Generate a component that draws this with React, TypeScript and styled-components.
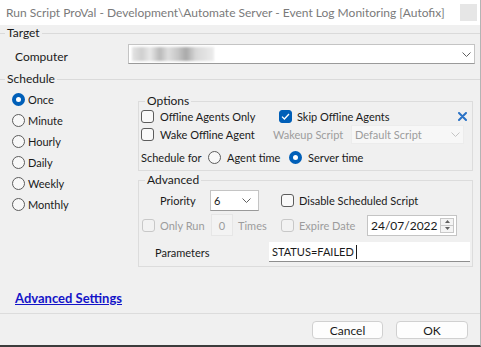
import React from 'react'
import styled, { createGlobalStyle, css } from 'styled-components'

const GlobalStyle = createGlobalStyle`
  html, body {
    margin: 0;
    padding: 0;
    background: #f0f0f0;
  }
  body {
    font-family: Lato, "Noto Sans", sans-serif;
    font-size: 11px;
    color: #1a1a1a;
  }
`

const Window = styled.div`
  width: 481px;
  height: 347px;
  box-sizing: border-box;
  display: flex;
  flex-direction: column;
  background: #f0f0f0;
  border-right: 1px solid #b4b4b4;
  border-bottom: 2px solid #3c3c3c;
  overflow: hidden;
`

const TitleBar = styled.div`
  flex: none;
  height: 25px;
  display: flex;
  align-items: center;
  padding: 0 3px 0 6px;
  background: #fff;
`

const Title = styled.div`
  flex: 1;
  font-size: 12px;
  color: #7a7a7a;
  white-space: nowrap;
  overflow: hidden;
`

const CloseBox = styled.div`
  width: 17px;
  height: 17px;
  background: #e6e6e6;
`

const Group = styled.fieldset<{ $boxed?: boolean; $width?: number }>`
  margin: 0;
  padding: 0;
  min-width: 0;
  box-sizing: border-box;
  border: 0;
  border-top: 1px solid #dadada;
  ${p =>
    p.$boxed &&
    css`
      border: 1px solid #dcdcdc;
    `}
  ${p =>
    p.$width &&
    css`
      width: ${p.$width}px;
    `}
`

const Legend = styled.legend<{ $offset: number }>`
  margin-left: ${p => p.$offset}px;
  padding: 0 2px;
  line-height: 16px;
  font-size: 12px;
`

const TargetRow = styled.div`
  display: flex;
  height: 20px;
  margin-top: 3px;
  padding: 0 0 7px 15px;
`

const FieldLabel = styled.span<{ $w: number }>`
  width: ${p => p.$w}px;
  padding-top: 5px;
  font-size: 12px;
`

const Combo = styled.div<{ $w: number; $h?: number; $disabled?: boolean; $pr?: number }>`
  flex: none;
  width: ${p => p.$w}px;
  height: ${p => p.$h || 20}px;
  box-sizing: border-box;
  display: flex;
  align-items: center;
  justify-content: space-between;
  padding: 0 ${p => p.$pr ?? 3}px 0 3px;
  background: ${p => (p.$disabled ? '#f7f7f7' : '#fff')};
  border: 1px solid ${p => (p.$disabled ? '#ececec' : '#c4c4c4')};
  border-bottom-color: ${p => (p.$disabled ? '#ececec' : '#9a9a9a')};
  color: ${p => (p.$disabled ? '#9c9c9c' : '#1a1a1a')};
`

const Blur = styled.div`
  width: 82px;
  height: 14px;
  background: linear-gradient(
    90deg,
    #e4e4e4 0%,
    #cfcfcf 12%,
    #e8e8e8 22%,
    #b9b9b9 34%,
    #dedede 44%,
    #c6c6c6 56%,
    #a9a9a9 66%,
    #d8d8d8 78%,
    #ececec 100%
  );
  filter: blur(1px);
`

const ScheduleBody = styled.div`
  display: flex;
`

const RadioList = styled.div`
  width: 138px;
  flex: none;
  box-sizing: border-box;
  padding: 2px 0 0 12px;
`

const RadioItem = styled.label`
  display: flex;
  align-items: center;
  gap: 3px;
  height: 21px;
`

const RightColumn = styled.div`
  margin-top: 6px;
  display: flex;
  flex-direction: column;
  gap: 1px;
`

const GroupBody = styled.div<{ $pb: number }>`
  padding: 0 0 ${p => p.$pb}px 2px;
`

const Row = styled.div<{ $h: number; $mt?: number }>`
  display: flex;
  align-items: center;
  height: ${p => p.$h}px;
  margin-top: ${p => p.$mt || 0}px;
`

const Cell = styled.div<{ $w?: number; $gap?: number; $pl?: number }>`
  display: flex;
  align-items: center;
  flex: none;
  gap: ${p => p.$gap ?? 6}px;
  padding-left: ${p => p.$pl || 0}px;
  box-sizing: border-box;
  ${p =>
    p.$w &&
    css`
      width: ${p.$w}px;
    `}
  white-space: nowrap;
`

const Text = styled.span<{ $disabled?: boolean }>`
  color: ${p => (p.$disabled ? '#9c9c9c' : '#1a1a1a')};
  white-space: nowrap;
`

const CheckBox = styled.span<{ $checked?: boolean; $disabled?: boolean }>`
  flex: none;
  width: 13px;
  height: 13px;
  box-sizing: border-box;
  border-radius: 3px;
  display: flex;
  align-items: center;
  justify-content: center;
  border: 1px solid ${p => (p.$disabled ? '#c8c8c8' : p.$checked ? '#005fb8' : '#5c5c5c')};
  background: ${p => (p.$checked ? '#005fb8' : p.$disabled ? '#f2f2f2' : '#f9f9f9')};
`

const RadioDot = styled.span<{ $checked?: boolean }>`
  flex: none;
  width: 13px;
  height: 13px;
  box-sizing: border-box;
  border-radius: 50%;
  ${p =>
    p.$checked
      ? css`
          border: 4px solid #005fb8;
          background: #fff;
        `
      : css`
          border: 1px solid #5c5c5c;
          background: #f8f8f8;
        `}
`

const CloseX = styled.svg`
  margin-left: auto;
  margin-right: 5px;
`

const SmallBox = styled.div`
  flex: none;
  width: 22px;
  height: 22px;
  box-sizing: border-box;
  display: flex;
  align-items: center;
  justify-content: center;
  background: #f3f3f3;
  border: 1px solid #e6e6e6;
  color: #9c9c9c;
`

const DateBox = styled.div`
  flex: none;
  width: 90px;
  height: 21px;
  box-sizing: border-box;
  display: flex;
  align-items: center;
  justify-content: space-between;
  padding: 0 2px 0 3px;
  background: #fff;
  border: 1px solid #c4c4c4;
  font-size: 12px;
`

const Spin = styled.div`
  width: 14px;
  height: 15px;
  box-sizing: border-box;
  display: flex;
  flex-direction: column;
  border: 1px solid #c8c8c8;
  background: #f4f4f4;
`

const SpinHalf = styled.div<{ $top?: boolean }>`
  flex: 1;
  display: flex;
  align-items: center;
  justify-content: center;
  ${p =>
    p.$top &&
    css`
      border-bottom: 1px solid #c8c8c8;
    `}
`

const ParamInput = styled.div`
  flex: none;
  width: 201px;
  height: 20px;
  box-sizing: border-box;
  display: flex;
  align-items: center;
  padding-left: 3px;
  background: #fff;
  border-bottom: 1px solid #8e8e8e;
`

const Caret = styled.span`
  width: 1px;
  height: 14px;
  margin-left: 2px;
  background: #1a1a1a;
`

const Footer = styled.div`
  margin-top: auto;
  flex: none;
`

const LinkRow = styled.div`
  height: 16px;
  padding-left: 15px;
  margin-bottom: 7px;
  line-height: 16px;
`

const Link = styled.a`
  color: #1414c8;
  font-size: 13px;
  font-weight: 700;
  text-decoration: underline;
  cursor: pointer;
`

const ButtonBar = styled.div`
  height: 32px;
  box-sizing: border-box;
  border-top: 1px solid #dcdcdc;
  display: flex;
  justify-content: flex-end;
  gap: 13px;
  padding: 7px 12px 0 0;
`

const Button = styled.button<{ $w: number }>`
  width: ${p => p.$w}px;
  height: 18px;
  padding: 0;
  font: inherit;
  font-size: 12px;
  color: #1a1a1a;
  background: #fdfdfd;
  border: 1px solid #d0d0d0;
  border-radius: 4px;
`

const Chevron = ({ color = '#606060' }: { color?: string }) => (
  <svg width="9" height="5" viewBox="0 0 9 5">
    <polyline points="0.5,0.5 4.5,4.5 8.5,0.5" fill="none" stroke={color} strokeWidth="1" />
  </svg>
)

const Tick = () => (
  <svg width="9" height="7" viewBox="0 0 9 7">
    <polyline points="1,3.6 3.4,6 8,1" fill="none" stroke="#fff" strokeWidth="1.3" />
  </svg>
)

const Check = ({ label, checked, disabled, gap = 6 }: { label: string; checked?: boolean; disabled?: boolean; gap?: number }) => (
  <Cell $gap={gap}>
    <CheckBox $checked={checked} $disabled={disabled}>{checked && <Tick />}</CheckBox>
    <Text $disabled={disabled}>{label}</Text>
  </Cell>
)

const frequencies = ['Once', 'Minute', 'Hourly', 'Daily', 'Weekly', 'Monthly']

export default function App() {
  return (
    <>
      <GlobalStyle />
      <Window>
        <TitleBar>
          <Title>Run Script ProVal - Development\Automate Server - Event Log Monitoring [Autofix]</Title>
          <CloseBox />
        </TitleBar>

        <Group>
          <Legend $offset={5}>Target</Legend>
          <TargetRow>
            <FieldLabel $w={113}>Computer</FieldLabel>
            <Combo $w={347}>
              <Blur />
              <Chevron />
            </Combo>
          </TargetRow>
        </Group>

        <Group>
          <Legend $offset={5}>Schedule</Legend>
          <ScheduleBody>
            <RadioList>
              {frequencies.map((f, i) => (
                <RadioItem key={f}>
                  <RadioDot $checked={i === 0} />
                  <Text>{f}</Text>
                </RadioItem>
              ))}
            </RadioList>

            <RightColumn>
              <Group $boxed $width={335}>
                <Legend $offset={6}>Options</Legend>
                <GroupBody $pb={1}>
                  <Row $h={15}>
                    <Cell $w={138}>
                      <Check label="Offline Agents Only" />
                    </Cell>
                    <Check label="Skip Offline Agents" checked gap={5} />
                    <CloseX width="9" height="9" viewBox="0 0 9 9">
                      <path d="M1 1 L8 8 M8 1 L1 8" stroke="#2a72c6" strokeWidth="2" strokeLinecap="round" />
                    </CloseX>
                  </Row>
                  <Row $h={21}>
                    <Cell $w={132}>
                      <Check label="Wake Offline Agent" />
                    </Cell>
                    <Cell $w={78}>
                      <Text $disabled>Wakeup Script</Text>
                    </Cell>
                    <Combo $w={113} $h={19} $disabled>
                      <span>Default Script</span>
                      <Chevron color="#c4c4c4" />
                    </Combo>
                  </Row>
                  <Row $h={24}>
                    <Cell $w={67}>
                      <Text>Schedule for</Text>
                    </Cell>
                    <Cell $w={81}>
                      <RadioDot />
                      <Text>Agent time</Text>
                    </Cell>
                    <Cell>
                      <RadioDot $checked />
                      <Text>Server time</Text>
                    </Cell>
                  </Row>
                </GroupBody>
              </Group>

              <Group $boxed $width={335}>
                <Legend $offset={6}>Advanced</Legend>
                <GroupBody $pb={4}>
                  <Row $h={21} $mt={2}>
                    <Cell $w={69} $pl={19}>
                      <Text>Priority</Text>
                    </Cell>
                    <Combo $w={49} $h={21} $pr={7}>
                      <span>6</span>
                      <Chevron />
                    </Combo>
                    <Cell $pl={22}>
                      <Check label="Disable Scheduled Script" gap={5} />
                    </Cell>
                  </Row>
                  <Row $h={22} $mt={3}>
                    <Cell $w={70} $pl={1} $gap={5}>
                      <Check label="Only Run" disabled gap={5} />
                    </Cell>
                    <SmallBox>0</SmallBox>
                    <Cell $w={48} $pl={5}>
                      <Text $disabled>Times</Text>
                    </Cell>
                    <Cell $w={86}>
                      <Check label="Expire Date" disabled gap={5} />
                    </Cell>
                    <DateBox>
                      <span>24/07/2022</span>
                      <Spin>
                        <SpinHalf $top>
                          <svg width="5" height="3" viewBox="0 0 5 3">
                            <polygon points="0,3 2.5,0 5,3" fill="#606060" />
                          </svg>
                        </SpinHalf>
                        <SpinHalf>
                          <svg width="5" height="3" viewBox="0 0 5 3">
                            <polygon points="0,0 2.5,3 5,0" fill="#606060" />
                          </svg>
                        </SpinHalf>
                      </Spin>
                    </DateBox>
                  </Row>
                  <Row $h={20} $mt={6}>
                    <Cell $w={128} $pl={14}>
                      <Text>Parameters</Text>
                    </Cell>
                    <ParamInput>
                      <span>STATUS=FAILED</span>
                      <Caret />
                    </ParamInput>
                  </Row>
                </GroupBody>
              </Group>
            </RightColumn>
          </ScheduleBody>
        </Group>

        <Footer>
          <LinkRow>
            <Link>Advanced Settings</Link>
          </LinkRow>
          <ButtonBar>
            <Button $w={71}>Cancel</Button>
            <Button $w={72}>OK</Button>
          </ButtonBar>
        </Footer>
      </Window>
    </>
  )
}
